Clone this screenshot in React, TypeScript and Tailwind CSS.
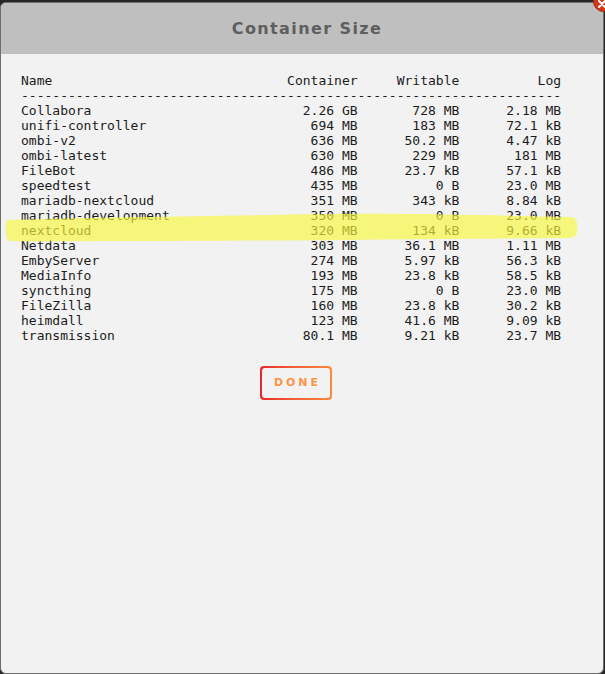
import React from 'react';

const rows: [string, string, string, string][] = [
  ['Collabora', '2.26 GB', '728 MB', '2.18 MB'],
  ['unifi-controller', '694 MB', '183 MB', '72.1 kB'],
  ['ombi-v2', '636 MB', '50.2 MB', '4.47 kB'],
  ['ombi-latest', '630 MB', '229 MB', '181 MB'],
  ['FileBot', '486 MB', '23.7 kB', '57.1 kB'],
  ['speedtest', '435 MB', '0 B', '23.0 MB'],
  ['mariadb-nextcloud', '351 MB', '343 kB', '8.84 kB'],
  ['mariadb-development', '350 MB', '0 B', '23.0 MB'],
  ['nextcloud', '320 MB', '134 kB', '9.66 kB'],
  ['Netdata', '303 MB', '36.1 MB', '1.11 MB'],
  ['EmbyServer', '274 MB', '5.97 kB', '56.3 kB'],
  ['MediaInfo', '193 MB', '23.8 kB', '58.5 kB'],
  ['syncthing', '175 MB', '0 B', '23.0 MB'],
  ['FileZilla', '160 MB', '23.8 kB', '30.2 kB'],
  ['heimdall', '123 MB', '41.6 MB', '9.09 kB'],
  ['transmission', '80.1 MB', '9.21 kB', '23.7 MB'],
];

const line = (a: string, b: string, c: string, d: string) =>
  a.padEnd(33) + b.padStart(10) + c.padStart(13) + d.padStart(13);

const report = [
  line('Name', 'Container', 'Writable', 'Log'),
  '-'.repeat(69),
  ...rows.map((r) => line(...r)),
].join('\n');

export default function App() {
  return (
    <div className="relative w-[605px] h-[674px] overflow-hidden bg-[#262626] pt-[2px]">
      <div className="w-[604px] h-[672px] flex flex-col overflow-hidden rounded-[6px] border border-[#6e6e6e] bg-[#f2f2f2]">
        {/* header */}
        <div className="h-[51px] shrink-0 flex items-center justify-center bg-[#bfbfbf]">
          <h1 className="font-['DejaVu_Sans',sans-serif] text-[16px] font-bold tracking-[1.4px] pl-[10px] text-[#5e5e5e]">
            Container Size
          </h1>
        </div>

        {/* body */}
        <div className="flex flex-col pl-[20px] pt-[19px]">
          <pre className="font-['DejaVu_Sans_Mono',monospace] text-[13px] leading-[15px] text-[#1c1c1c]">
            {report}
          </pre>

          <div className="mt-[23px] ml-[239px] w-[72px] h-[34px] rounded-[4px] p-[2px] bg-gradient-to-r from-[#e8232e] to-[#ff8a3c]">
            <button className="w-full h-full rounded-[3px] bg-[#f2f2f2] flex items-center justify-center font-['DejaVu_Sans',sans-serif] text-[11px] font-bold tracking-[3px] pl-[3px] pt-[1px] text-[#fd9445]">
              DONE
            </button>
          </div>
        </div>
      </div>

      {/* marker highlight over the nextcloud row */}
      <svg
        className="absolute left-[5px] top-[212px] pointer-events-none"
        width="574"
        height="32"
        viewBox="0 0 574 32"
      >
        <path
          d="M2 8 C 60 6, 200 4, 330 2 C 420 1, 500 4, 566 5 C 572 6, 573 12, 572 20 C 571 25, 568 26, 560 26 C 420 27, 250 29, 120 29 C 60 29, 20 30, 4 29 C 0 26, 0 12, 2 8 Z"
          fill="#f8f83c"
          fillOpacity="0.66"
        />
      </svg>

      {/* close badge */}
      <div className="absolute right-[-9px] top-[-9px] w-[21px] h-[21px] rounded-full bg-[#d6371a] border border-[#9a2410] flex items-center justify-center">
        <svg width="10" height="10" viewBox="0 0 10 10" className="-translate-x-[2px] translate-y-[2px]">
          <path d="M2 2 L8 8 M8 2 L2 8" stroke="#fff" strokeWidth="2" strokeLinecap="round" />
        </svg>
      </div>
    </div>
  );
}
